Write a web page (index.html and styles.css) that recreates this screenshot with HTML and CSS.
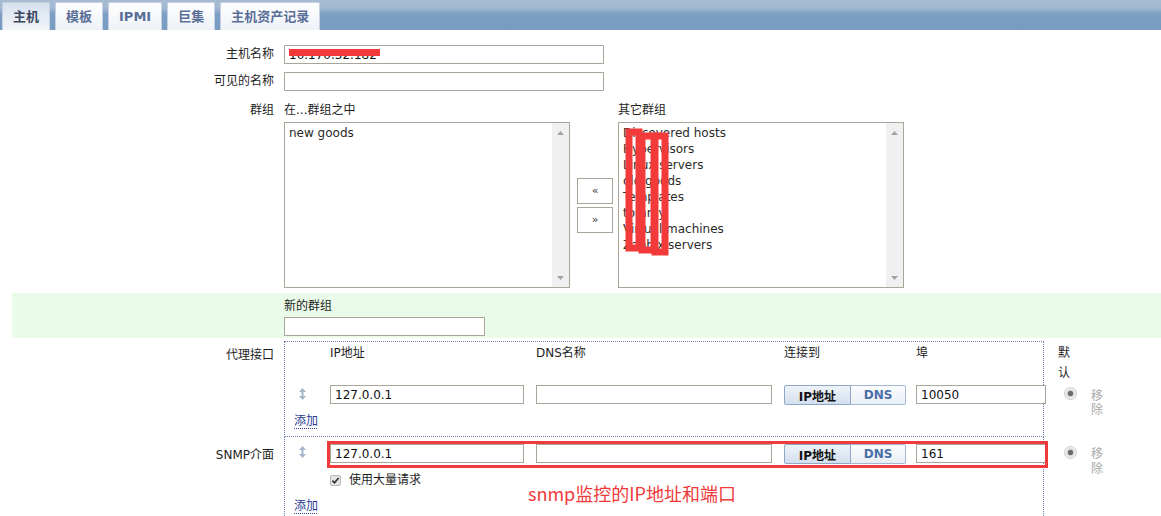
FILE: index.html
```html
<!DOCTYPE html>
<html lang="zh">
<head>
<meta charset="utf-8">
<title>主机</title>
<link rel="stylesheet" href="styles.css">
</head>
<body>
<div class="tabs">
  <div class="tab active">主机</div>
  <div class="tab">模板</div>
  <div class="tab">IPMI</div>
  <div class="tab">巨集</div>
  <div class="tab">主机资产记录</div>
</div>

<div class="form">
  <div class="row simple">
    <div class="label">主机名称</div>
    <div class="field">
      <div class="redact-wrap">
        <input class="text w320" value="10.170.32.182">
        <span class="redact"></span>
      </div>
    </div>
  </div>

  <div class="row simple">
    <div class="label">可见的名称</div>
    <div class="field"><input class="text w320" value=""></div>
  </div>

  <div class="row groups">
    <div class="label">群组</div>
    <div class="groups-grid">
      <div class="ghead c1">在...群组之中</div>
      <div class="ghead c3">其它群组</div>
      <div class="listbox c1">
        <div class="items"><div>new goods</div></div>
        <div class="scroll">
          <svg width="7" height="4" viewBox="0 0 7 4"><path d="M0 4 L3.5 0 L7 4 Z" fill="#a3a3a3"/></svg>
          <svg width="7" height="4" viewBox="0 0 7 4"><path d="M0 0 L7 0 L3.5 4 Z" fill="#a3a3a3"/></svg>
        </div>
      </div>
      <div class="movebtns">
        <div class="move">«</div>
        <div class="move">»</div>
      </div>
      <div class="listbox c3">
        <div class="items">
          <div>Discovered hosts</div>
          <div>Hypervisors</div>
          <div>Linux servers</div>
          <div>old goods</div>
          <div>Templates</div>
          <div>tommy</div>
          <div>Virtual machines</div>
          <div>Zabbix servers</div>
        </div>
        <div class="scroll">
          <svg width="7" height="4" viewBox="0 0 7 4"><path d="M0 4 L3.5 0 L7 4 Z" fill="#a3a3a3"/></svg>
          <svg width="7" height="4" viewBox="0 0 7 4"><path d="M0 0 L7 0 L3.5 4 Z" fill="#a3a3a3"/></svg>
        </div>
        <svg class="scribble" width="60" height="140" viewBox="0 0 60 140">
          <rect x="10" y="9" width="10" height="116" fill="none" stroke="#f23a3a" stroke-width="7"/>
          <rect x="23" y="13" width="12" height="114" fill="none" stroke="#f23a3a" stroke-width="7"/>
          <rect x="36" y="13" width="10" height="116" fill="none" stroke="#f23a3a" stroke-width="7"/>
        </svg>
      </div>
    </div>
  </div>

  <div class="row newgroup">
    <div class="label"></div>
    <div class="field">
      <div class="nglabel">新的群组</div>
      <input class="text w201" value="">
    </div>
  </div>

  <div class="row agent">
    <div class="label">代理接口</div>
    <div class="iface agent-grid">
      <div class="box"></div>
      <div class="hd c2">IP地址</div>
      <div class="hd c3">DNS名称</div>
      <div class="hd c4">连接到</div>
      <div class="hd c5">埠</div>
      <div class="hd c7 narrow">默认</div>

      <svg class="drag c1" width="7" height="12" viewBox="0 0 7 12"><path d="M3.5 0 L7 4 L0 4 Z M2.5 4 H4.5 V8 H2.5 Z M0 8 L7 8 L3.5 12 Z" fill="#a5b6cb"/></svg>
      <input class="text ip c2" value="127.0.0.1">
      <input class="text dns c3" value="">
      <div class="seg c4"><span class="on">IP地址</span><span class="off">DNS</span></div>
      <input class="text port c5" value="10050">
      <svg class="radio c7" width="13" height="13" viewBox="0 0 13 13"><circle cx="6.5" cy="6.5" r="6" fill="#f0f0f0" stroke="#cdcdcd"/><circle cx="6.5" cy="6.5" r="4.4" fill="#e0e0e0"/><circle cx="6.5" cy="6.5" r="2.7" fill="#6c6c6c"/></svg>
      <div class="remove c8">移除</div>

      <a class="add">添加</a>
    </div>
  </div>

  <div class="row snmp">
    <div class="label">SNMP介面</div>
    <div class="iface snmp-grid">
      <div class="box open"></div>

      <svg class="drag c1" width="7" height="12" viewBox="0 0 7 12"><path d="M3.5 0 L7 4 L0 4 Z M2.5 4 H4.5 V8 H2.5 Z M0 8 L7 8 L3.5 12 Z" fill="#a5b6cb"/></svg>
      <input class="text ip c2" value="127.0.0.1">
      <input class="text dns c3" value="">
      <div class="seg c4"><span class="on">IP地址</span><span class="off">DNS</span></div>
      <input class="text port c5" value="161">
      <svg class="radio c7" width="13" height="13" viewBox="0 0 13 13"><circle cx="6.5" cy="6.5" r="6" fill="#f0f0f0" stroke="#cdcdcd"/><circle cx="6.5" cy="6.5" r="4.4" fill="#e0e0e0"/><circle cx="6.5" cy="6.5" r="2.7" fill="#6c6c6c"/></svg>
      <div class="remove c8">移除</div>
      <div class="hl"></div>

      <div class="bulk">
        <svg width="11" height="11" viewBox="0 0 11 11"><rect x="0.5" y="0.5" width="10" height="10" rx="1.5" fill="#e4e4e4" stroke="#b8b8b8"/><path d="M2.4 5.6 L4.5 7.7 L8.6 3" stroke="#333" stroke-width="1.7" fill="none"/></svg>
        <span>使用大量请求</span>
      </div>
      <div class="note">snmp监控的IP地址和端口</div>

      <a class="add">添加</a>
    </div>
  </div>
</div>
</body>
</html>
```

FILE: styles.css
```css
html, body {
  margin: 0;
  padding: 0;
  background: #ffffff;
}

body {
  font-family: "DejaVu Sans", "Noto Sans CJK SC", sans-serif;
  font-size: 12px;
  color: #1e1e1e;
  overflow: hidden;
}

/* ---------- tabs ---------- */
.tabs {
  height: 30px;
  box-sizing: border-box;
  display: flex;
  align-items: flex-end;
  gap: 5px;
  padding-left: 2px;
  background: linear-gradient(#a7bbd3 0, #a3b8d1 8px, #7c9fc4 14px, #789cc1 30px);
}

.tab {
  height: 28px;
  box-sizing: border-box;
  padding: 0 10px;
  line-height: 27px;
  font-weight: bold;
  font-size: 13px;
  color: #5a6f98;
  background: linear-gradient(#fdfefe, #eef2f7);
  border: 1px solid #c6d2e1;
  border-bottom: none;
  border-radius: 2px 2px 0 0;
  white-space: nowrap;
}

.tab.active {
  color: #3a475f;
  background: linear-gradient(#d6e1ee, #f2f5f9);
}

/* ---------- form rows ---------- */
.form {
  padding-top: 11px;
}

.row {
  display: grid;
  grid-template-columns: 262px 1fr;
  column-gap: 10px;
  margin-left: 12px;
}

.label {
  text-align: right;
  white-space: nowrap;
}

.row.simple {
  padding: 4px 0;
}

.row.simple .label {
  line-height: 19px;
}

.field {
  display: block;
}

.text {
  display: block;
  height: 19px;
  box-sizing: border-box;
  margin: 0;
  padding: 0 4px;
  border: 1px solid #a9a699;
  border-radius: 0;
  background: #fff;
  font-family: "DejaVu Sans", sans-serif;
  font-size: 12px;
  color: #111;
  outline: none;
}

.w320 { width: 320px; }
.w201 { width: 201px; }

.redact-wrap {
  position: relative;
  width: 320px;
}

.redact {
  position: absolute;
  left: 5px;
  top: 4px;
  width: 91px;
  height: 7px;
  background: #f23a3a;
}

/* ---------- groups ---------- */
.row.groups {
  padding: 6px 0 5px;
}

.row.groups .label {
  line-height: 18px;
}

.groups-grid {
  display: grid;
  grid-template-columns: 286px 48px 286px;
  grid-template-rows: 18px 166px;
  row-gap: 3px;
}

.c1 { grid-column: 1; }
.c2 { grid-column: 2; }
.c3 { grid-column: 3; }
.c4 { grid-column: 4; }
.c5 { grid-column: 5; }
.c7 { grid-column: 7; }
.c8 { grid-column: 8; }

.ghead {
  grid-row: 1;
  line-height: 18px;
  white-space: nowrap;
}

.listbox {
  grid-row: 2;
  position: relative;
  display: flex;
  box-sizing: border-box;
  height: 166px;
  border: 1px solid #a9a699;
  background: #fff;
}

.items {
  flex: 1;
  padding: 2px 4px;
  line-height: 16px;
  color: #2a2a2a;
  white-space: nowrap;
}

.scroll {
  width: 17px;
  background: #f0f0f0;
  display: flex;
  flex-direction: column;
  justify-content: space-between;
  align-items: center;
  padding: 8px 0 7px;
  box-sizing: border-box;
}

.scroll svg {
  display: block;
}

.scribble {
  position: absolute;
  left: 0;
  top: 0;
}

.movebtns {
  grid-row: 2;
  grid-column: 2;
  align-self: center;
  display: flex;
  flex-direction: column;
  gap: 3px;
  margin-left: 7px;
}

.move {
  width: 36px;
  height: 26px;
  box-sizing: border-box;
  border: 1px solid #a9a699;
  background: #fff;
  display: flex;
  align-items: center;
  justify-content: center;
  font-size: 11px;
  color: #3a3a3a;
}

/* ---------- new group ---------- */
.row.newgroup {
  background: #ebfbe9;
  padding: 5px 0 2px;
}

.nglabel {
  line-height: 16px;
  margin-bottom: 3px;
}

/* ---------- interfaces ---------- */
.row.agent {
  padding-top: 3px;
}

.row.agent .label {
  padding-top: 6px;
  line-height: 16px;
}

.row.snmp .label {
  padding-top: 10px;
  line-height: 16px;
}

.iface {
  display: grid;
  grid-template-columns: 46px 206px 248px 132px 128px 14px 32px 20px;
}

.iface > * {
  align-self: start;
  justify-self: start;
  position: relative;
}

.box {
  grid-column: 1 / 6;
  grid-row: 1 / -1;
  align-self: stretch !important;
  justify-self: stretch !important;
  border: 1px dotted #6d7fae;
  box-sizing: border-box;
}

.box.open {
  border-top: none;
  border-bottom: none;
}

.hd {
  grid-row: 1;
  padding-top: 2px;
  line-height: 20px;
  white-space: nowrap;
}

.hd.narrow {
  width: 13px;
  white-space: normal;
}

.drag {
  display: block;
  margin-left: 15px;
}

.ip { width: 194px; }
.dns { width: 236px; }
.port { width: 130px; }

.seg {
  display: flex;
  height: 20px;
  font-weight: bold;
  font-size: 12px;
}

.seg span {
  display: flex;
  align-items: center;
  justify-content: center;
  box-sizing: border-box;
  height: 20px;
}

.seg .on {
  width: 67px;
  color: #111;
  border: 1px solid #8ea7c7;
  border-radius: 2px 0 0 2px;
  background: linear-gradient(#eef3f9, #d3dfed);
}

.seg .off {
  width: 55px;
  color: #4a6ea6;
  border: 1px solid #a4b8d2;
  border-left: none;
  border-radius: 0 2px 2px 0;
  background: linear-gradient(#fbfcfd, #e9eff6);
}

.radio {
  display: block;
  margin-left: 6px;
}

.remove {
  width: 13px;
  line-height: 14px;
  color: #a8a8a8;
  margin-left: 1px;
}

.add {
  grid-column: 1 / 3;
  margin-left: 10px;
  line-height: 16px;
  color: #2b3a94;
  text-decoration: underline dotted;
  text-underline-offset: 3px;
  cursor: pointer;
}

/* agent grid rows */
.agent-grid {
  grid-template-rows: 42px 29px 25px;
}

.agent-grid .text,
.agent-grid .seg {
  grid-row: 2;
  margin-top: 2px;
}

.agent-grid .drag {
  grid-row: 2;
  margin-top: 5px;
}

.agent-grid .radio {
  grid-row: 2;
  margin-top: 4px;
}

.agent-grid .remove {
  grid-row: 2 / 4;
  margin-top: 6px;
}

.agent-grid .add {
  grid-row: 3;
  margin-top: 1px;
}

/* snmp grid rows */
.snmp-grid {
  grid-template-rows: 33px 20px 30px;
}

.snmp-grid .text,
.snmp-grid .seg {
  grid-row: 1;
  margin-top: 7px;
}

.snmp-grid .drag {
  grid-row: 1;
  margin-top: 9px;
}

.snmp-grid .radio {
  grid-row: 1;
  margin-top: 9px;
}

.snmp-grid .remove {
  grid-row: 1 / 3;
  margin-top: 10px;
  line-height: 15px;
}

.hl {
  grid-row: 1;
  grid-column: 2 / 6;
  justify-self: stretch !important;
  margin: 4px -4px 0 -3px;
  height: 27px;
  box-sizing: border-box;
  border: 3px solid #ef3b3b;
  z-index: 2;
}

.bulk {
  grid-row: 2;
  grid-column: 2 / 4;
  display: flex;
  align-items: center;
  gap: 8px;
  height: 20px;
  line-height: 20px;
  white-space: nowrap;
}

.bulk svg {
  display: block;
}

.note {
  grid-row: 2 / 4;
  grid-column: 3 / 6;
  margin: 12px 0 0 -8px;
  font-family: "Noto Sans CJK SC", "DejaVu Sans", sans-serif;
  font-size: 18px;
  line-height: 22px;
  color: #f03a3a;
  white-space: nowrap;
  z-index: 3;
}

.snmp-grid .add {
  grid-row: 3;
  margin-top: 8px;
}
```
